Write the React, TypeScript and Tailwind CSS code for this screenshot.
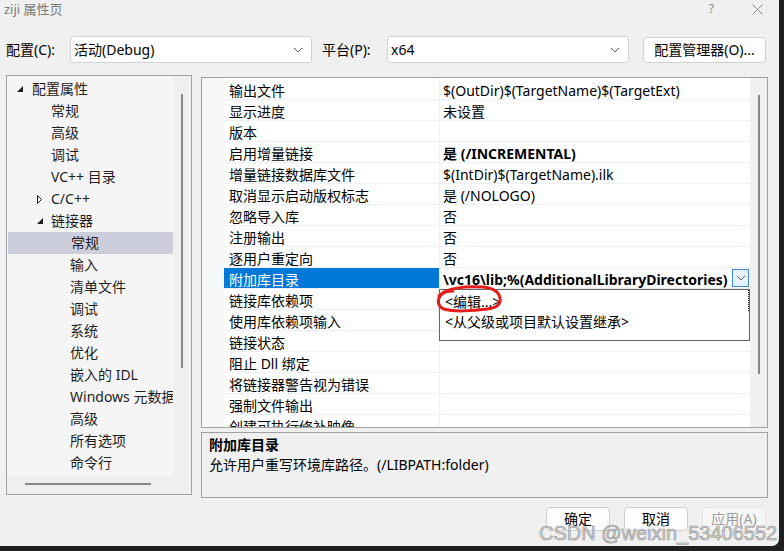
import React from "react";

type TreeItem = { label: string; level: number; expander?: "open" | "closed"; selected?: boolean };

const treeItems: TreeItem[] = [
  { label: "配置属性", level: 0, expander: "open" },
  { label: "常规", level: 1 },
  { label: "高级", level: 1 },
  { label: "调试", level: 1 },
  { label: "VC++ 目录", level: 1 },
  { label: "C/C++", level: 1, expander: "closed" },
  { label: "链接器", level: 1, expander: "open" },
  { label: "常规", level: 2, selected: true },
  { label: "输入", level: 2 },
  { label: "清单文件", level: 2 },
  { label: "调试", level: 2 },
  { label: "系统", level: 2 },
  { label: "优化", level: 2 },
  { label: "嵌入的 IDL", level: 2 },
  { label: "Windows 元数据", level: 2 },
  { label: "高级", level: 2 },
  { label: "所有选项", level: 2 },
  { label: "命令行", level: 2 },
];

type Prop = { name: string; value: string; bold?: boolean; selected?: boolean };

const props: Prop[] = [
  { name: "输出文件", value: "$(OutDir)$(TargetName)$(TargetExt)" },
  { name: "显示进度", value: "未设置" },
  { name: "版本", value: "" },
  { name: "启用增量链接", value: "是 (/INCREMENTAL)", bold: true },
  { name: "增量链接数据库文件", value: "$(IntDir)$(TargetName).ilk" },
  { name: "取消显示启动版权标志", value: "是 (/NOLOGO)" },
  { name: "忽略导入库", value: "否" },
  { name: "注册输出", value: "否" },
  { name: "逐用户重定向", value: "否" },
  { name: "附加库目录", value: "\\vc16\\lib;%(AdditionalLibraryDirectories)", bold: true, selected: true },
  { name: "链接库依赖项", value: "" },
  { name: "使用库依赖项输入", value: "" },
  { name: "链接状态", value: "" },
  { name: "阻止 Dll 绑定", value: "" },
  { name: "将链接器警告视为错误", value: "" },
  { name: "强制文件输出", value: "" },
  { name: "创建可执行修补映像", value: "" },
];

const Chevron = () => (
  <svg width="10" height="6" viewBox="0 0 10 6" className="text-[#606060]">
    <path d="M1 1 L5 5 L9 1" fill="none" stroke="currentColor" strokeWidth="1" />
  </svg>
);

const Combo = ({ text }: { text: string }) => (
  <div className="w-[242px] h-[27px] bg-white border border-[#d3d3d3] rounded-[3px] flex items-center pl-[3px] pr-[8px] justify-between">
    <span>{text}</span>
    <Chevron />
  </div>
);

const Expander = ({ kind }: { kind: "open" | "closed" }) =>
  kind === "open" ? (
    <svg width="6" height="6" viewBox="0 0 6 6">
      <path d="M6 0 L6 6 L0 6 Z" fill="#1e1e1e" />
    </svg>
  ) : (
    <svg width="5" height="9" viewBox="0 0 5 9">
      <path d="M0.5 0.5 L4.5 4.5 L0.5 8.5 Z" fill="none" stroke="#1e1e1e" strokeWidth="1" />
    </svg>
  );

const TreePanel = () => (
  <div className="w-[186px] h-[420px] border border-[#a0a0a0] flex flex-col">
    <div className="flex flex-1 min-h-0">
      <div className="w-[166px] bg-[#f5f5f5] pt-[2px] overflow-hidden">
        {treeItems.map((it, i) => {
          const pad = it.level === 0 ? "pl-[25px]" : it.level === 1 ? "pl-[44px]" : "pl-[63px]";
          const expLeft = it.level === 0 ? "left-[10px]" : "left-[30px]";
          return (
            <div
              key={i}
              className={`relative h-[22px] flex items-center whitespace-nowrap text-[#1e1e1e] ${pad} ${
                it.selected ? "bg-[#cccedb] ml-[1px]" : ""
              }`}
            >
              {it.expander && (
                <span className={`absolute ${expLeft} top-0 h-full flex items-center`}>
                  <Expander kind={it.expander} />
                </span>
              )}
              {it.label}
            </div>
          );
        })}
      </div>
      <div className="flex-1 bg-[#efefef] pl-[8px] pt-[18px]">
        <div className="w-[2px] h-[274px] bg-[#868686]" />
      </div>
    </div>
    <div className="h-[18px] bg-[#efefef] pl-[18px] pt-[7px]">
      <div className="w-[126px] h-[2px] bg-[#868686]" />
    </div>
  </div>
);

const RedMark = () => (
  <svg
    width="72"
    height="32"
    viewBox="0 0 72 32"
    className="absolute left-[-5px] top-[-6px] pointer-events-none"
  >
    <path
      d="M4 12 C 10 4, 30 2, 48 3 C 58 4, 64 8, 65 14 C 66 20, 62 24, 52 25 C 38 27, 18 28, 9 25 C 3 23, 2 17, 5 12 C 8 8, 14 7, 18 7"
      fill="none"
      stroke="#e31d1a"
      strokeWidth="3"
      strokeLinecap="round"
    />
  </svg>
);

const DropPopup = () => (
  <div className="absolute left-[-1px] top-[21px] w-[311px] h-[52px] bg-white border border-[#646464] z-10 font-normal">
    <div className="relative h-[21px] flex items-center pl-[5px] pt-[2px] border-r border-dotted border-[#222]">
      &lt;编辑...&gt;
      <RedMark />
    </div>
    <div className="h-[21px] flex items-center pl-[5px]">&lt;从父级或项目默认设置继承&gt;</div>
  </div>
);

const PropGrid = () => (
  <div className="h-[351px] border border-[#a0a0a0] flex overflow-hidden">
    <div className="w-[548px] flex bg-white">
      <div className="w-[22px] bg-[#f6f7f9]" />
      <div className="flex-1 flex flex-col pt-[1px]">
        {props.map((p, i) => (
          <div key={i} className="h-[21px] flex shrink-0 border-b border-[#edf0f4]">
            <div
              className={`w-[216px] pl-[5px] pt-[4px] flex items-center whitespace-nowrap border-r border-[#edf0f4] ${
                p.selected ? "bg-[#0078d7] text-white" : "text-black"
              }`}
            >
              {p.name}
            </div>
            <div
              className={`relative flex-1 pl-[3px] flex items-center whitespace-nowrap ${
                p.bold ? "font-bold" : ""
              }`}
            >
              <span className="flex-1 overflow-hidden pt-[4px]">{p.value}</span>
              {p.selected && (
                <>
                  <div className="w-[17px] h-[18px] mr-[1px] border border-[#3c8ad8] bg-[#e5f1fb] flex items-center justify-center">
                    <Chevron />
                  </div>
                  <DropPopup />
                </>
              )}
            </div>
          </div>
        ))}
      </div>
    </div>
    <div className="flex-1 bg-[#f0f0f0] pl-[8px] pt-[17px]">
      <div className="w-[2px] h-[279px] bg-[#868686]" />
    </div>
  </div>
);

const Btn = ({ label, disabled }: { label: string; disabled?: boolean }) => (
  <div
    className={`w-[64px] h-[24px] rounded-[4px] border flex items-center justify-center ${
      disabled ? "border-[#e2e2e2] bg-[#f6f6f6] text-[#a0a0a0]" : "border-[#d0d0d0] bg-[#fdfdfd] text-black"
    }`}
  >
    {label}
  </div>
);

export default function App() {
  return (
    <div className="w-[784px] h-[551px] bg-[#1f1f1f] overflow-hidden text-[14px] leading-[20px] font-['Noto_Sans','Noto_Sans_CJK_SC',sans-serif]">
      <div className="relative w-[779px] h-[546px] bg-[#f0f0f0] rounded-br-[7px] flex flex-col">
        {/* title bar */}
        <div className="h-[30px] flex items-start justify-between pl-[4px] pt-[1px]">
          <span className="text-[13px] leading-[17px] text-[#7a7a7a]">ziji 属性页</span>
          <div className="flex items-center gap-[38px] pr-[16px] pt-[1px] text-[#8a8a8a]">
            <span className="text-[12px] leading-[14px]">?</span>
            <svg width="11" height="11" viewBox="0 0 11 11">
              <path d="M0.5 0.5 L10.5 10.5 M10.5 0.5 L0.5 10.5" stroke="#8a8a8a" strokeWidth="1" />
            </svg>
          </div>
        </div>

        {/* config row */}
        <div className="mt-[6px] h-[27px] flex items-center pl-[6px]">
          <span className="w-[64px]">配置(C):</span>
          <Combo text="活动(Debug)" />
          <span className="ml-[10px] w-[65px]">平台(P):</span>
          <Combo text="x64" />
          <div className="ml-[14px] w-[123px] h-[26px] bg-[#fdfdfd] border border-[#d0d0d0] rounded-[4px] flex items-center justify-center">
            配置管理器(O)...
          </div>
        </div>

        {/* main */}
        <div className="mt-[12px] flex pl-[6px]">
          <TreePanel />
          <div className="ml-[9px] w-[567px] pt-[2px] flex flex-col">
            <PropGrid />
            <div className="mt-[4px] h-[66px] border border-[#a0a0a0] pl-[7px] pt-[2px]">
              <div className="font-bold">附加库目录</div>
              <div>允许用户重写环境库路径。(/LIBPATH:folder)</div>
            </div>
          </div>
        </div>

        {/* buttons */}
        <div className="mt-[9px] flex justify-end gap-[14px] pr-[13px]">
          <Btn label="确定" />
          <Btn label="取消" />
          <Btn label="应用(A)" disabled />
        </div>

        <span className="absolute left-[539px] top-[521px] text-[20px] leading-[24px] font-['Liberation_Sans',sans-serif] text-[#d6d6d6] [-webkit-text-stroke:0.6px_#909090] pointer-events-none whitespace-nowrap">
          CSDN @weixin_53406552
        </span>
      </div>
    </div>
  );
}
